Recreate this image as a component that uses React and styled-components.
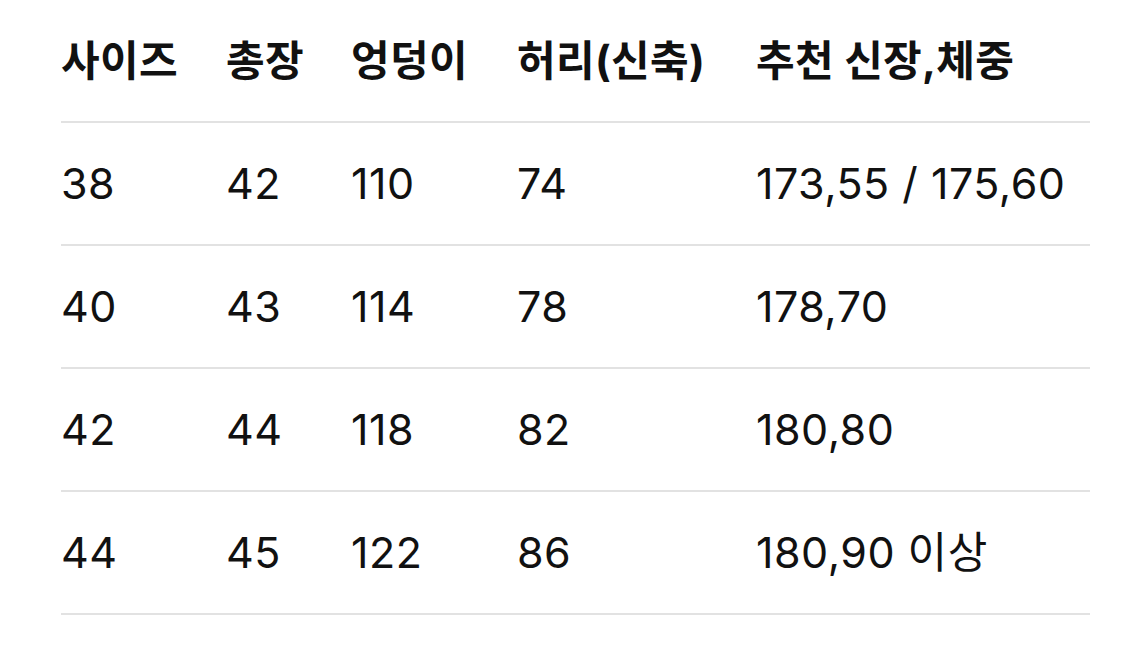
import React from "react";
import styled, { createGlobalStyle } from "styled-components";

const GlobalStyle = createGlobalStyle`
  html, body {
    margin: 0;
    padding: 0;
    background: #ffffff;
  }
  body {
    font-family: Inter, "Noto Sans CJK KR", sans-serif;
    color: #111111;
  }
`;

const headers = ["사이즈", "총장", "엉덩이", "허리(신축)", "추천 신장,체중"];

const rows = [
  ["38", "42", "110", "74", "173,55 / 175,60"],
  ["40", "43", "114", "78", "178,70"],
  ["42", "44", "118", "82", "180,80"],
  ["44", "45", "122", "86", "180,90 이상"],
];

function App() {
  return (
    <Page>
      <GlobalStyle />
      <Table>
        <Row>
          {headers.map((h) => (
            <Cell key={h} head>
              {h}
            </Cell>
          ))}
        </Row>
        {rows.map((r) => (
          <Row key={r[0]}>
            {r.map((v, i) => (
              <Cell key={i}>{v}</Cell>
            ))}
          </Row>
        ))}
      </Table>
    </Page>
  );
}

const Page = styled.div`
  width: 1125px;
  height: 662px;
  padding: 0 35px 0 61px;
  box-sizing: border-box;
`;

const Table = styled.div`
  display: flex;
  flex-direction: column;
`;

const Row = styled.div`
  display: grid;
  grid-template-columns: 165px 125px 166px 239px 1fr;
  height: 123px;
  box-sizing: border-box;
  border-bottom: 2px solid #e2e2e2;
  align-items: center;
`;

const Cell = styled.div`
  font-size: ${(p) => (p.head ? "42px" : "43px")};
  font-weight: ${(p) => (p.head ? 700 : 400)};
  letter-spacing: ${(p) => (p.head ? "0.3px" : "0.5px")};
  white-space: nowrap;
  line-height: 1;
`;

export default App;
